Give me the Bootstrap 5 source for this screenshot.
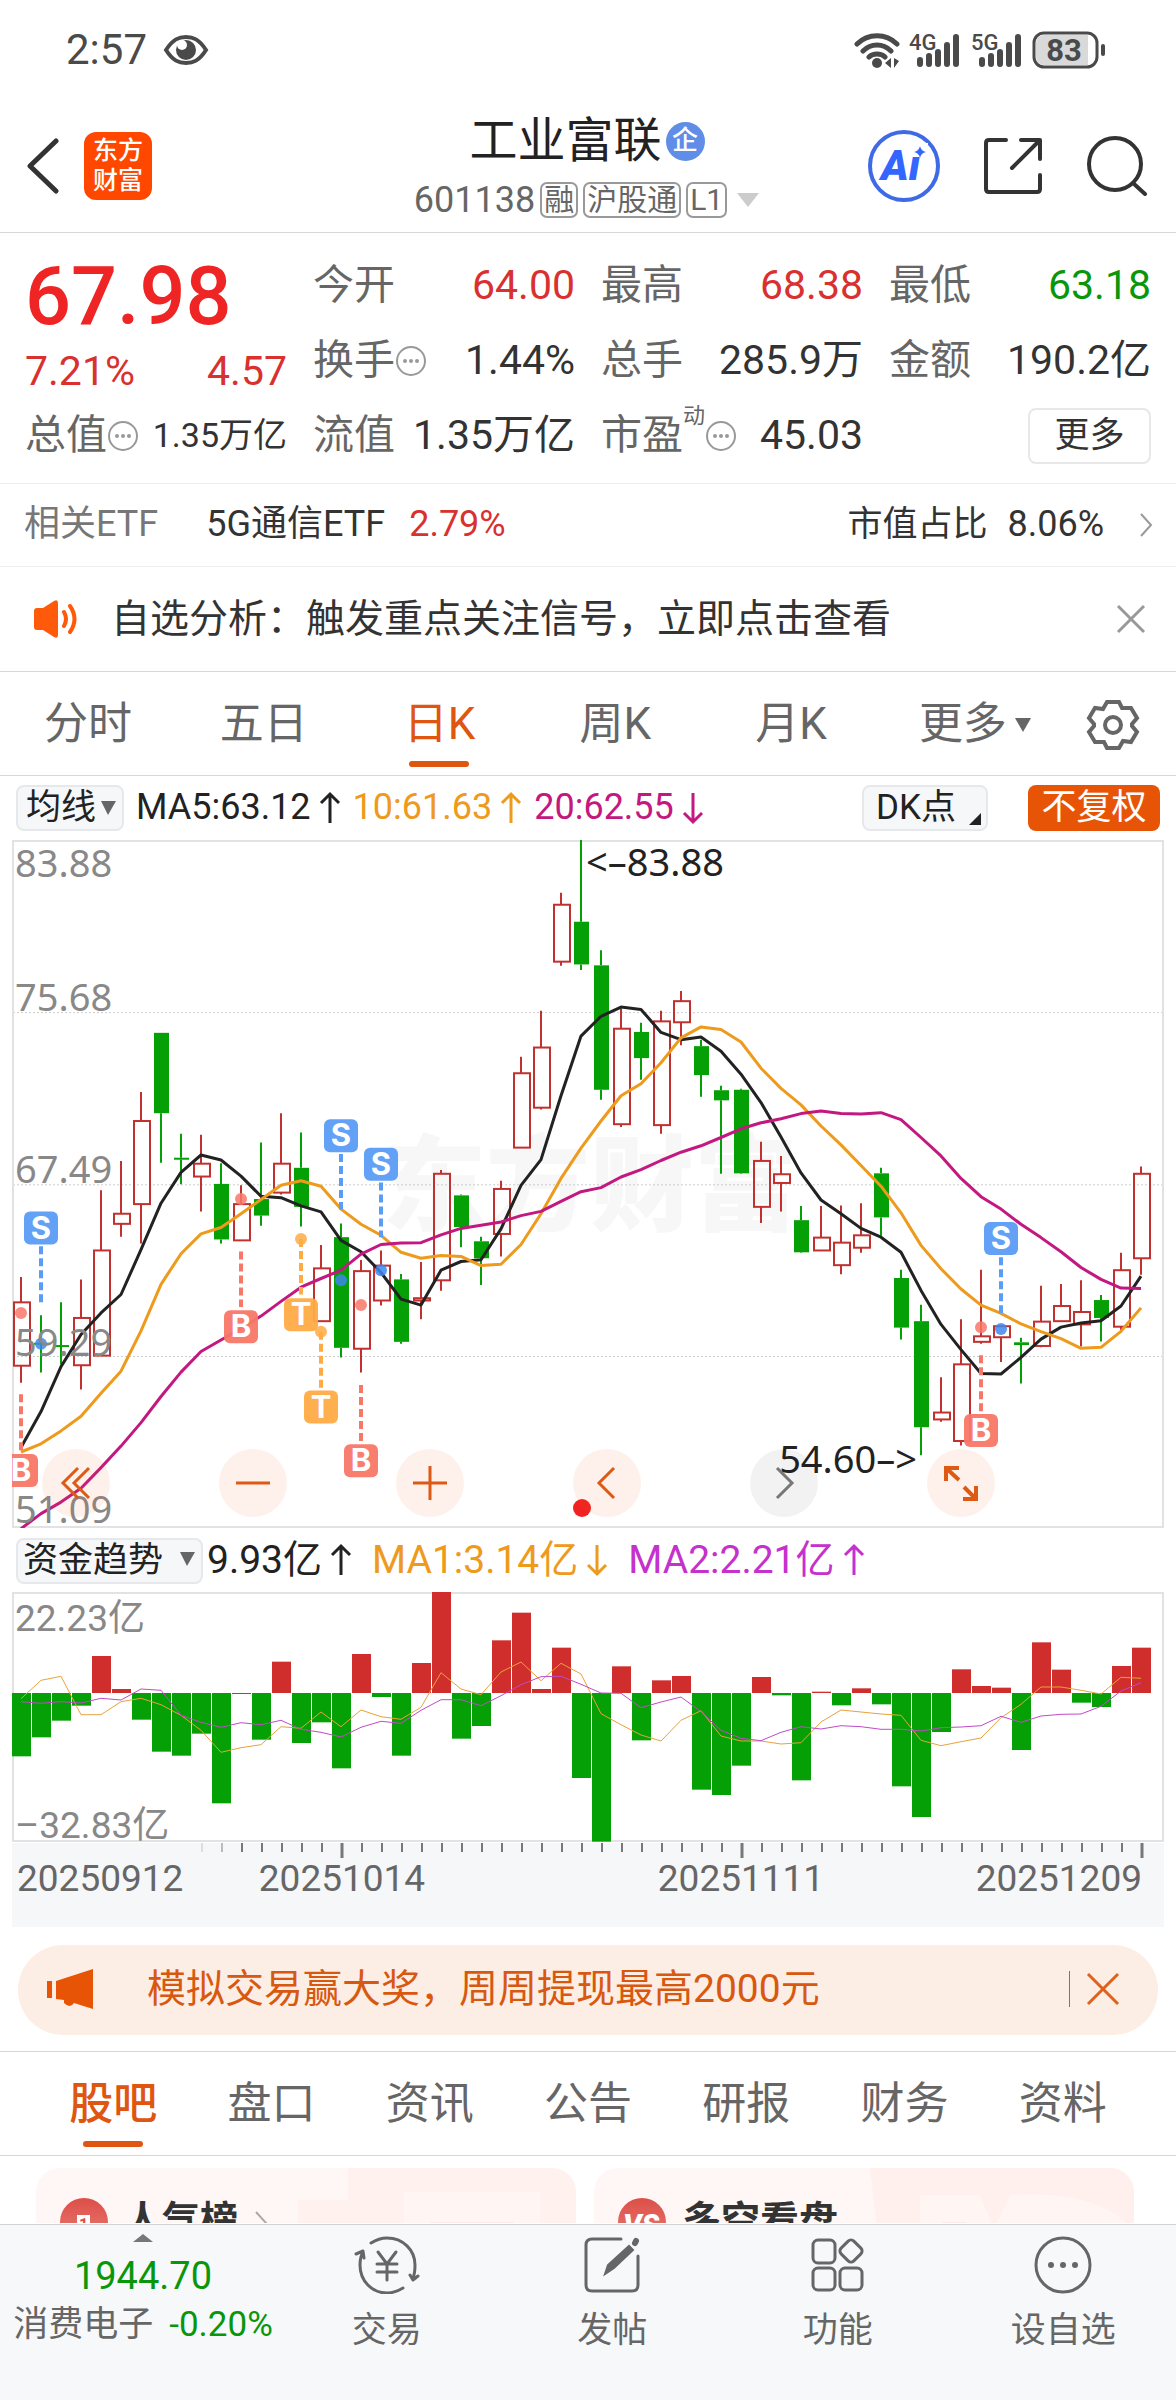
<!DOCTYPE html>
<html lang="zh-CN">
<head>
<meta charset="utf-8">
<meta name="viewport" content="width=device-width, initial-scale=1">
<title>工业富联 601138</title>
<link href="https://cdn.jsdelivr.net/npm/bootstrap@5.3.0/dist/css/bootstrap.min.css" rel="stylesheet">
<style>
:root{--brand:#e85406;--up:#d8312f;--down:#0a960a;--ink:#333;--soft:#666;--rule:#d8d8d8;--rule2:#ededed}
body{font-family:Roboto,"Noto Sans CJK SC",sans-serif;color:var(--ink);background:#fff;line-height:1.2;padding-bottom:176px}
svg{display:block;flex:none}
button,select{font-family:inherit;color:inherit}
a{color:inherit;text-decoration:none}
.plain{background:none;border:0;padding:0}
.statusbar{height:100px;padding:0 70px 0 66px;font-size:42px;color:#4a4a4a}
.topbar{display:grid;grid-template-columns:1fr auto 1fr;height:133px;padding:0 28px 0 26px;border-bottom:1px solid var(--rule)}
.topbar .side{height:132px}
.topbar .acts{gap:44px}
.brandmark{width:68px;height:68px;border-radius:12px;background:#ff4700;color:#fff;font-size:25px;font-weight:500;line-height:30px}
.stockname{font-size:48px;line-height:58px;color:#222;font-weight:400}
.qi{width:39px;height:39px;border-radius:50%;background:#5f8de8;color:#fff;font-size:26px;font-weight:500}
.stockcode{font-size:36px;line-height:40px;color:var(--soft);gap:5px;margin-top:10px}
.pill{height:36px;border:2px solid #999;border-radius:7px;padding:0 2px;font-size:30px;line-height:32px}
.quote{display:grid;grid-template-columns:repeat(4,1fr);grid-auto-rows:75px;column-gap:26px;padding:15px 25px 10px;font-size:41px;border-bottom:1px solid var(--rule2)}
.quote .lead-col{grid-row:span 3}
.quote .cell{display:flex;align-items:center;justify-content:space-between;white-space:nowrap}
.quote .cap{color:var(--soft);display:flex;align-items:center}
.price{height:98px;font-size:81px;font-weight:500;color:#ef2424}
.rowb{height:52px}.rowc{height:75px}
.s34{font-size:34px}
.up{color:var(--up)}.down{color:var(--down)}
.sup-dong{font-size:22px;align-self:flex-start;margin-top:-8px}
.morebtn{width:123px;height:56px;border:2px solid #e8e8e8;border-radius:8px;background:#fff;font-size:35px;line-height:40px}
.etf{height:83px;padding:0 20px 0 24px;font-size:36px;border-bottom:1px solid var(--rule2)}
.etf .cjk{font-size:35px}
.notice{height:105px;padding:0 30px 0 33px;font-size:39px;border-bottom:1px solid var(--rule)}
.tabs1{height:104px;border-bottom:1px solid var(--rule);font-size:44px;color:var(--soft);padding-right:4px}
.tabs1 .tab{width:15%}
.tab{height:100%;display:flex;align-items:center;justify-content:center;position:relative;background:none;border:0;padding:2px 0 0}
.tab.on{color:#de560f}
.tab.on::after{content:"";position:absolute;left:50%;bottom:8px;width:60px;height:6px;margin-left:-30px;border-radius:3px;background:#de560f}
.inds{height:64px;margin:0 16px;font-size:36px;white-space:nowrap}
.chip{height:46px;border:2px solid #e6e8ec;border-radius:8px;background:#f6f7f9;font-size:35px;line-height:40px;color:#222;padding:0 0 0 8px;appearance:none}
.chip.w1{width:108px}.chip.w2{width:187px;padding-left:5px}.chip.w3{width:126px;text-align:left;padding-left:12px}
.caret{position:absolute;right:8px;top:16px;pointer-events:none}
.caret.low{top:26px;right:5px}
.fq{width:132px;height:46px;border:0;border-radius:8px;background:var(--brand);color:#fff;font-size:35px;line-height:40px;padding:0;margin-left:40px}
.m5{color:#222}.m10{color:#ee9a1c}.m20{color:#c2187f}.f38{font-size:38px}.f39{font-size:39px}.mv{color:#c531cd}
.chartbox{margin:0 12px;position:relative}
.chartbox svg.plot{width:100%;height:auto}
.tools{position:absolute;left:0;right:0;bottom:11px;padding-left:30px;display:flex;gap:109px}
.rnd{width:68px;height:68px;border-radius:50%;border:0;padding:0;background:rgba(240,100,30,.09);display:flex;align-items:center;justify-content:center}
.rnd.off{background:rgba(0,0,0,.05)}
.numtxt{font-family:"Noto Sans","Noto Sans CJK SC",sans-serif;font-size:38px}
.promo{margin:18px 18px 16px;height:90px;border-radius:45px;background:#fceee5;color:#d9580f;font-size:39px;padding:0 38px 2px 29px}
.promo .bar{width:1px;height:36px;background:#d9580f}
.tabs2{height:105px;border-top:1px solid var(--rule);border-bottom:1px solid var(--rule);padding:0 34px;font-size:44px;color:var(--soft)}
.tabs2 .tab{flex:1}
.promos{padding:12px 42px 0 36px;gap:18px;height:67px;overflow:hidden}
.pcard{flex:1;height:150px;border-radius:24px;background:#fff7f5;padding:30px 24px;font-size:38px;font-weight:700;position:relative;overflow:hidden}
.pcard .deco{position:absolute;right:0;top:0}
.dot48{width:48px;height:48px;border-radius:50%;background:linear-gradient(#dc4f47,#e98079);color:#fff;overflow:hidden}
.bottomnav{height:176px;background:#f6f8fa;border-top:1px solid #d0d3d6;font-size:35px;color:var(--soft);align-items:stretch;padding:0}
.bottomnav .first{width:274px;padding:9px 0 0 12px}
.bottomnav .item{flex:1;padding-top:11px}
.bottomnav .item span{margin-top:16px}
</style>
<script src="https://cdn.jsdelivr.net/npm/bootstrap@5.3.0/dist/js/bootstrap.bundle.min.js"></script>
</head>
<body>
<div class="statusbar d-flex align-items-center">
  <span>2:57</span>
  <svg class="ms-3" width="46" height="32" viewBox="0 0 46 32"><path d="M3 16C10 5 16 3 23 3s13 2 20 13C36 27 30 29 23 29S10 27 3 16z" fill="none" stroke="#4a4a4a" stroke-width="4"/><circle cx="23" cy="16" r="10" fill="#4a4a4a"/><circle cx="19" cy="11" r="5" fill="#fff"/></svg>
  <div class="ms-auto d-flex align-items-center">
    <svg width="46" height="38" viewBox="0 0 46 38" fill="none" stroke="#4a4a4a" stroke-width="5" stroke-linecap="round"><path d="M3 13C14 2 32 2 43 13M9 20c8-8 20-8 28 0M15 26c4-4 12-4 16 0"/><circle cx="23" cy="32" r="5" fill="#4a4a4a" stroke="none"/><path d="M37 27v10l-6-5zM40 27v10l5-7z" fill="#4a4a4a" stroke="none"/></svg>
    <svg class="ms-2" width="54" height="38" viewBox="0 0 54 38" fill="none" stroke="#4a4a4a" stroke-width="6" stroke-linecap="round"><text x="1" y="19" font-size="22" font-weight="500" fill="#4a4a4a" stroke="none">4G</text><path d="M12 33v-4M21 33v-8M30 33V21M39 33V14M48 33V6"/></svg>
    <svg class="ms-2" width="54" height="38" viewBox="0 0 54 38" fill="none" stroke="#4a4a4a" stroke-width="6" stroke-linecap="round"><text x="1" y="19" font-size="22" font-weight="500" fill="#4a4a4a" stroke="none">5G</text><path d="M12 33v-4M21 33v-8M30 33V21M39 33V14M48 33V6"/></svg>
    <svg class="ms-2" width="74" height="38" viewBox="0 0 74 38"><rect x="2" y="2" width="63" height="34" rx="10" fill="#fff" stroke="#4a4a4a" stroke-width="3"/><path d="M12 4h44v30H12a8 8 0 0 1-8-8V12a8 8 0 0 1 8-8z" fill="#d9d9d9"/><text x="32" y="30" text-anchor="middle" font-size="31" font-weight="700" fill="#4a4a4a">83</text><path d="M71 15v8" stroke="#4a4a4a" stroke-width="4" stroke-linecap="round"/></svg>
  </div>
</div>

<header class="topbar">
  <div class="side d-flex align-items-center">
    <button class="plain" aria-label="返回"><svg width="34" height="56" viewBox="0 0 34 56"><path d="M30 3L4 28l26 25" fill="none" stroke="#333" stroke-width="5" stroke-linecap="round" stroke-linejoin="round"/></svg></button>
    <div class="brandmark ms-4 d-flex align-items-center justify-content-center text-center">东方<br>财富</div>
  </div>
  <div class="d-flex flex-column align-items-center pt-2">
    <div class="d-flex align-items-center mt-1"><h1 class="stockname m-0">工业富联</h1><span class="qi ms-1 d-flex align-items-center justify-content-center">企</span></div>
    <div class="stockcode d-flex align-items-center"><span>601138</span><span class="pill">融</span><span class="pill">沪股通</span><span class="pill">L1</span><svg class="ms-1" width="24" height="16" viewBox="0 0 24 16"><path d="M1 1h22L12 15z" fill="#ccc"/></svg></div>
  </div>
  <div class="side acts d-flex align-items-center justify-content-end">
    <button class="plain" aria-label="Ai"><svg width="72" height="72" viewBox="0 0 72 72"><circle cx="36" cy="36" r="34" fill="none" stroke="#3f6ae6" stroke-width="4"/><text x="13" y="50" font-size="42" font-weight="900" font-style="italic" fill="#3366ff">Ai</text><rect x="42" y="13" width="18" height="14" fill="#fff"/><path d="M52 16q1 5 6 6q-5 1-6 6q-1-5-6-6q5-1 6-6z" fill="#3366ff"/></svg></button>
    <button class="plain" aria-label="分享"><svg width="58" height="58" viewBox="0 0 58 58" fill="none" stroke="#333" stroke-width="4" stroke-linejoin="round" stroke-linecap="round"><path d="M22 3H5q-3 0-3 3v46q0 3 3 3h48q3 0 3-3V38M37 3h19v19M55 4L28 31"/></svg></button>
    <button class="plain" aria-label="搜索"><svg width="62" height="60" viewBox="0 0 62 60" fill="none" stroke="#333" stroke-width="4" stroke-linecap="round"><circle cx="29" cy="28" r="26"/><path d="M47 47l12 11"/></svg></button>
  </div>
</header>

<section class="quote">
  <div class="lead-col">
    <div class="price d-flex align-items-center">67.98</div>
    <div class="cell up rowb"><span>7.21%</span><span>4.57</span></div>
    <div class="cell rowc"><span class="cap">总值<svg width="32" height="32" viewBox="0 0 32 32"><use href="#more-dots"/></svg></span><span class="s34">1.35万亿</span></div>
  </div>
  <div class="cell"><span class="cap">今开</span><span class="up">64.00</span></div>
  <div class="cell"><span class="cap">最高</span><span class="up">68.38</span></div>
  <div class="cell"><span class="cap">最低</span><span class="down">63.18</span></div>
  <div class="cell"><span class="cap">换手<svg width="32" height="32" viewBox="0 0 32 32"><use href="#more-dots"/></svg></span><span>1.44%</span></div>
  <div class="cell"><span class="cap">总手</span><span>285.9万</span></div>
  <div class="cell"><span class="cap">金额</span><span>190.2亿</span></div>
  <div class="cell"><span class="cap">流值</span><span>1.35万亿</span></div>
  <div class="cell"><span class="cap">市盈<span class="sup-dong">动</span><svg width="32" height="32" viewBox="0 0 32 32"><use href="#more-dots"/></svg></span><span>45.03</span></div>
  <div class="cell justify-content-end"><button class="morebtn p-0">更多</button></div>
</section>
<svg width="0" height="0" class="position-absolute"><defs><g id="more-dots"><circle cx="16" cy="16" r="14" fill="none" stroke="#999" stroke-width="2"/><g fill="#999"><circle cx="10" cy="16" r="2"/><circle cx="16" cy="16" r="2"/><circle cx="22" cy="16" r="2"/></g></g></defs></svg>

<a href="#" class="etf d-flex align-items-center">
  <span style="color:#777">相关ETF</span><span class="ms-5">5G通信ETF</span><span class="up ms-4">2.79%</span>
  <span class="cjk ms-auto">市值占比</span><span class="ms-3 ps-1">8.06%</span>
  <svg class="ms-4 ps-2" width="28" height="26" viewBox="0 0 20 26"><path d="M5 2l10 11L5 24" fill="none" stroke="#999" stroke-width="2"/></svg>
</a>

<div class="notice d-flex align-items-center">
  <svg width="46" height="40" viewBox="0 0 46 40"><path d="M1 12q0-3 3-3h6L21 2q4-2 4 2v32q0 4-4 2L10 31H4q-3 0-3-3z" fill="#ff5a0a"/><path d="M31 13q4 7 0 14M37 7q9 13 0 26" fill="none" stroke="#ff5a0a" stroke-width="4" stroke-linecap="round"/></svg>
  <span class="ms-4 ps-2">自选分析：触发重点关注信号，立即点击查看</span>
  <button class="plain ms-auto" aria-label="关闭"><svg width="30" height="30" viewBox="0 0 30 30"><path d="M2 2l26 26M28 2L2 28" stroke="#999" stroke-width="3"/></svg></button>
</div>

<nav class="tabs1 d-flex align-items-center">
  <button class="tab">分时</button><button class="tab">五日</button><button class="tab on">日K</button><button class="tab">周K</button><button class="tab">月K</button>
  <button class="tab ps-3">更多<svg class="ms-2" width="16" height="14" viewBox="0 0 16 14"><path d="M0 0h16L8 14z" fill="#666"/></svg></button>
  <button class="tab flex-fill w-auto" aria-label="设置"><svg width="54" height="54" viewBox="-27 -27 54 54" fill="none" stroke="#666" stroke-width="4"><path d="M-6-23H6L9-17 18-17 24-7 19-1V1L24 7 18 17 10 16 6 23H-6L-9 17-18 17-24 7-19 1V-1L-24-7-18-17-10-16z"/><circle r="8"/></svg></button>
</nav>

<div class="inds d-flex align-items-center">
  <div class="position-relative"><select class="chip w1" aria-label="主图指标"><option>均线</option></select><svg class="caret" width="15" height="14" viewBox="0 0 15 14"><path d="M0 0h15L7 14z" fill="#666"/></svg></div>
  <span class="m5 d-flex align-items-center ms-2 ps-1">MA5:63.12<svg class="ms-2" width="22" height="34" viewBox="0 0 22 34"><use href="#arr"/></svg></span>
  <span class="m10 d-flex align-items-center ms-2 ps-1">10:61.63<svg class="ms-2" width="22" height="34" viewBox="0 0 22 34"><use href="#arr"/></svg></span>
  <span class="m20 d-flex align-items-center ms-2 ps-1">20:62.55<svg class="ms-2" width="22" height="34" viewBox="0 0 22 34"><use href="#arr" transform="rotate(180 11 17)"/></svg></span>
  <button class="chip w3 position-relative ms-auto">DK点<svg class="caret low" width="12" height="12" viewBox="0 0 12 12"><path d="M12 0v12H0z" fill="#222"/></svg></button>
  <button class="fq">不复权</button>
</div>
<svg width="0" height="0" class="position-absolute"><defs><path id="arr" d="M11 32V3M2 12l9-9 9 9" fill="none" stroke="currentColor" stroke-width="3"/></defs></svg>

<div class="chartbox">
  <svg class="plot" id="kline" viewBox="0 0 1152 688" role="img" aria-label="日K线"></svg>
  <div class="tools">
    <button class="rnd" aria-label="最左"><svg width="32" height="34" viewBox="0 0 32 34" fill="none" stroke="#dd5a14" stroke-width="3"><path d="M18 2L3 17l15 15M29 2L14 17l15 15"/></svg></button>
    <button class="rnd" aria-label="缩小"><svg width="34" height="34" viewBox="0 0 34 34" stroke="#dd5a14" stroke-width="3"><path d="M0 17h34"/></svg></button>
    <button class="rnd" aria-label="放大"><svg width="34" height="34" viewBox="0 0 34 34" stroke="#dd5a14" stroke-width="3"><path d="M0 17h34M17 0v34"/></svg></button>
    <button class="rnd" aria-label="左移"><svg width="22" height="34" viewBox="0 0 22 34" fill="none" stroke="#dd5a14" stroke-width="3"><path d="M18 2L3 17l15 15"/></svg></button>
    <button class="rnd off" aria-label="右移"><svg width="22" height="34" viewBox="0 0 22 34" fill="none" stroke="#777" stroke-width="3"><path d="M4 2l15 15L4 32"/></svg></button>
    <button class="rnd" aria-label="全屏"><svg width="36" height="36" viewBox="0 0 36 36" fill="none" stroke="#dd5a14" stroke-width="4"><path d="M3 16V3h13M3 3l13 12M20 34h13V21M33 34L21 22"/></svg></button>
  </div>
</div>

<div class="inds f39 d-flex align-items-center">
  <div class="position-relative"><select class="chip w2" aria-label="副图指标"><option>资金趋势</option></select><svg class="caret" width="15" height="14" viewBox="0 0 15 14"><path d="M0 0h15L7 14z" fill="#666"/></svg></div>
  <span class="m5 d-flex align-items-center ms-1">9.93亿<svg class="ms-2 me-1" width="22" height="34" viewBox="0 0 22 34"><use href="#arr"/></svg></span>
  <span class="m10 d-flex align-items-center ms-3">MA1:3.14亿<svg class="ms-2" width="22" height="34" viewBox="0 0 22 34"><use href="#arr" transform="rotate(180 11 17)"/></svg></span>
  <span class="mv d-flex align-items-center ms-3 ps-1">MA2:2.21亿<svg class="ms-2" width="22" height="34" viewBox="0 0 22 34"><use href="#arr"/></svg></span>
</div>
<div class="chartbox"><svg class="plot" id="flow" viewBox="0 0 1152 335" role="img" aria-label="资金趋势"></svg></div>

<div class="promo d-flex align-items-center">
  <svg width="48" height="42" viewBox="0 0 48 42" fill="#e85406"><path d="M0 13h5v17H0zM9 13L46 1v40L27 35q-4 6-10 0v-3l-8-1z"/></svg>
  <span class="ms-5 ps-1">模拟交易赢大奖，周周提现最高2000元</span>
  <span class="bar ms-auto me-3"></span>
  <button class="plain" aria-label="关闭"><svg width="34" height="34" viewBox="0 0 34 34"><path d="M2 2l30 30M32 2L2 32" stroke="#e0611b" stroke-width="3"/></svg></button>
</div>

<nav class="tabs2 d-flex">
  <button class="tab on fw-medium">股吧</button><button class="tab">盘口</button><button class="tab">资讯</button><button class="tab">公告</button><button class="tab">研报</button><button class="tab">财务</button><button class="tab">资料</button>
</nav>

<div class="promos d-flex">
  <a href="#" class="pcard d-flex"><svg class="deco" width="280" height="150" viewBox="0 0 280 150"><path d="M52 0h228v150H2V32h50z" fill="#fff1ee"/><path d="M108 24h136v126H108z" fill="#fff6f4"/><path d="M134 54h84v96h-84z" fill="#fdeae7"/></svg><span class="dot48"><svg width="48" height="48" viewBox="0 0 48 48"><path d="M8 25h9v-8h13v10h10v15H8z" fill="#fff"/><text x="19" y="32" font-size="16" font-weight="700" fill="#dc4f47">1</text></svg></span><span class="ms-3">人气榜</span><svg class="ms-3" width="14" height="48" viewBox="0 0 14 48"><path d="M2 14l10 11L2 36" fill="none" stroke="#aaa" stroke-width="2"/></svg></a>
  <a href="#" class="pcard d-flex"><svg class="deco" width="264" height="150" viewBox="0 0 264 150"><path d="M0 0h264v150H18z" fill="#ffefed"/><path d="M50 27h60l14 34 16-34q90-6 124 36v87H50z" fill="#fff5f3"/><path d="M72 54h24v96H72zM160 150V80q30-26 80 10v60z" fill="#fdeae8"/></svg><span class="dot48"><svg width="48" height="48" viewBox="0 0 48 48"><text x="23" y="37" text-anchor="middle" font-size="29" font-weight="900" font-style="italic" fill="#fff">VS</text></svg></span><span class="ms-3 f39">多空看盘</span></a>
</div>

<nav class="bottomnav fixed-bottom d-flex">
  <a href="#" class="first d-flex flex-column align-items-center down">
    <svg width="20" height="8" viewBox="0 0 20 8"><path d="M10 0l10 8H0z" fill="#777"/></svg>
    <span class="f38 mt-2 pt-1">1944.70</span>
    <span class="d-flex pt-1"><span style="color:#666">消费电子</span><span class="ms-3">-0.20%</span></span>
  </a>
  <a href="#" class="item d-flex flex-column align-items-center"><svg width="66" height="58" viewBox="0 0 66 58" fill="none" stroke="#666" stroke-width="3" stroke-linecap="round"><path d="M17 7q8-5 16-5c16 0 28 12 28 27q0 8-2 13M59 44l-3-5M59 44l5-4M49 52q-8 5-16 5C18 57 6 45 6 29q0-8 3-13M9 15l-7 3M9 15l1 7"/><path d="M24 16l9 12 9-12M33 28v16M23 28h20M23 36h20"/></svg><span>交易</span></a>
  <a href="#" class="item d-flex flex-column align-items-center"><svg width="58" height="58" viewBox="0 0 58 58" fill="none" stroke="#666" stroke-width="3" stroke-linecap="round"><path d="M38 3H9Q3 3 3 9v40q0 6 6 6h40q6 0 6-6V20"/><path d="M22 38l3-9L46 10l4 4-19 18z" fill="#666" stroke-width="2"/><path d="M52 7l1-2" stroke-width="6"/></svg><span>发帖</span></a>
  <a href="#" class="item d-flex flex-column align-items-center"><svg width="58" height="58" viewBox="0 0 58 58" fill="none" stroke="#666" stroke-width="3"><rect x="4" y="4" width="22" height="23" rx="5"/><rect x="4" y="32" width="22" height="22" rx="5"/><rect x="31" y="32" width="22" height="22" rx="5"/><rect x="33" y="6" width="18" height="18" rx="4" transform="rotate(45 42 15)"/></svg><span>功能</span></a>
  <a href="#" class="item d-flex flex-column align-items-center"><svg width="58" height="58" viewBox="0 0 58 58"><circle cx="29" cy="29" r="27" fill="none" stroke="#666" stroke-width="3"/><g fill="#666"><circle cx="17" cy="29" r="3"/><circle cx="29" cy="29" r="3"/><circle cx="41" cy="29" r="3"/></g></svg><span>设自选</span></a>
</nav>

<script>
const R='#c0312f',G='#05a005';
const X=i=>9+20*i;
// Candles: [rising, high, body top, body bottom, low] on the plot's own vertical scale
const K=[[1,995,1050,1188,1225],[0,1078,1138,1142,1203],[0,1050,1143,1147,1185],[1,1000,1084,1187,1240],[1,806,937,1166,1166],[1,742,857,879,907],[1,592,655,836,922],[0,463,463,638,746],[0,683,735,739,793],[1,685,748,776,852],[0,747,792,913,922],[1,795,836,915,915],[0,702,825,861,883],[1,638,748,811,815],[0,680,757,842,885],[1,925,976,1091,1091],[0,878,908,1149,1170],[1,958,982,1151,1203],[1,937,970,1046,1057],[0,988,1000,1136,1140],[1,962,1041,1046,1087],[1,762,770,1002,1025],[0,815,817,886,930],[0,907,917,954,1012],[1,785,803,901,950],[1,515,551,713,713],[1,415,495,626,630],[1,158,184,308,317],[0,43,221,314,326],[0,283,316,587,609],[1,410,454,662,668],[0,441,461,518,565],[1,415,438,664,683],[1,372,394,440,490],[0,478,492,555,602],[0,578,588,610,770],[0,585,587,769,770],[1,700,742,842,877],[1,731,771,790,852],[0,840,871,941,942],[1,840,909,937,937],[1,839,920,969,989],[1,834,904,931,942],[0,757,769,865,905],[0,979,997,1105,1131],[0,1055,1091,1322,1383],[1,1213,1290,1305,1310],[1,1087,1185,1352,1362],[1,979,1124,1136,1140],[1,1102,1102,1126,1180],[0,1127,1137,1143,1227],[1,1014,1092,1145,1148],[1,1010,1058,1091,1091],[1,1002,1071,1098,1146],[0,1034,1045,1084,1135],[1,942,980,1103,1115],[1,754,770,954,990]];
const MA5=[1366,1288,1190,1120,1073,1033,935,834,767,729,740,775,819,822,840,853,915,940,985,1043,1056,980,961,957,890,795,739,600,470,427,407,412,462,478,472,503,553,615,690,768,827,857,889,908,941,1024,1098,1153,1205,1206,1170,1130,1104,1095,1090,1058,993];
const MA10=[1376,1358,1330,1298,1248,1200,1112,1011,944,901,887,857,826,795,785,797,847,880,904,941,954,948,950,970,967,924,857,780,714,655,600,574,528,474,450,456,483,540,584,620,666,707,752,797,855,926,977,1021,1056,1074,1097,1114,1129,1150,1148,1113,1062];
const MA20=[1543,1510,1485,1455,1410,1363,1312,1255,1202,1157,1132,1107,1080,1048,1017,998,980,945,924,921,920,903,889,882,875,861,852,830,809,800,777,761,741,723,709,691,672,659,650,639,633,639,640,637,652,691,731,780,820,847,880,909,940,974,1000,1019,1020];
// Trade marks: [letter, index, badge centre, line start, line end, dot]
const MK=[['S',1,887,928,1050,1140],['S',16,686,727,848,1002],['S',18,748,789,908,980],['S',49,910,952,1073,1108],['B',0,1415,1250,1372,1073],['B',11,1102,939,1060,825],['B',17,1394,1230,1352,1056],['B',48,1328,1165,1287,1104],['T',14,1076,912,1033,912],['T',15,1277,1114,1236,1114]];
const MC={S:'#5b9cf6',B:'#f87868',T:'#ffab45'};
const Y=v=>(v-43)/2.178;
const line=(a,f,c,w)=>`<polyline points="${a.map((v,i)=>X(i)+','+f(v).toFixed(1)).join(' ')}" fill="none" stroke="${c}" stroke-width="${w}" stroke-linejoin="round"/>`;
let s='<text x="578" y="383" text-anchor="middle" font-size="104" font-weight="900" fill="#f7f7f7">东方财富</text>';
for(const v of [419,794,1168]) s+=`<path d="M1 ${Y(v)}H1151" stroke="#ccc" stroke-dasharray="2 2"/>`;
s+='<rect x="1" y="1" width="1150" height="686" fill="none" stroke="#e2e2e2" stroke-width="2"/>';
K.forEach(([up,h,t,b,l],i)=>{
  const x=X(i),c=up?R:G,[H,T,B,L]=[h,t,b,l].map(Y);
  s+=`<path d="M${x} ${H}V${T}M${x} ${B}V${L}" stroke="${c}" stroke-width="2"/>`;
  s+=up?`<rect x="${x-7}" y="${T}" width="16" height="${Math.max(B-T,1)}" fill="none" stroke="${c}" stroke-width="2"/>`:`<rect x="${x-7}" y="${T}" width="15" height="${Math.max(B-T,2)}" fill="${c}"/>`;
});
s+=line(MA5,Y,'#222',3)+line(MA10,Y,'#ee9a1c',3)+line(MA20,Y,'#c2187f',3);
for(const [k,i,c,a,b,d] of MK){
  const x=X(i),y=Y(c);
  s+=`<path d="M${x} ${Y(a)}V${Y(b)}" stroke="${MC[k]}" stroke-width="4" stroke-dasharray="8 4"/><circle cx="${x}" cy="${Y(d)}" r="6" fill="${k=='S'?'#3d86ee':MC[k]}" opacity=".85"/>`;
  s+=`<rect x="${x-17}" y="${y-16}" width="34" height="33" rx="6" fill="${MC[k]}" opacity=".95"/><text x="${x}" y="${y+11}" text-anchor="middle" font-family="Inter" font-size="31" font-weight="700" fill="#fff">${k}</text>`;
}
for(const [t,y] of [['83.88',37],['75.68',171],['67.49',343],['59.29',516],['51.09',683]]) s+=`<text class="numtxt" x="3" y="${y}" fill="#888">${t}</text>`;
s+='<text class="numtxt" x="574" y="36" fill="#222">&lt;–83.88</text><text class="numtxt" x="905" y="633" text-anchor="end" fill="#222">54.60–&gt;</text><circle cx="570" cy="668" r="9" fill="#f02222"/>';
document.getElementById('kline').innerHTML=s;

// Net inflow bars and their averages
const V=[678,621,571,526,377,476,568,664,676,610,819,491,628,394,638,576,714,371,500,676,398,185,625,587,330,247,476,352,743,934,408,630,450,437,778,794,706,440,495,750,484,525,474,522,768,860,605,417,467,472,659,336,418,517,530,407,352];
const F1=[505,450,438,553,553,514,504,523,555,600,666,652,643,589,594,545,589,539,559,567,531,427,476,493,425,395,451,399,431,550,583,614,632,570,541,617,632,632,641,637,575,539,545,551,555,630,646,634,623,562,522,470,470,480,491,441,444];
const F2=[514,519,514,518,504,509,476,480,555,576,591,577,583,570,597,606,620,591,573,579,540,508,508,526,496,463,439,438,462,488,489,532,515,500,544,600,624,631,606,589,596,586,589,597,597,602,592,590,586,558,576,557,552,551,528,482,457];
const Z=v=>(v-185)/3;
let f='<rect y="251" width="1152" height="84" fill="#f6f7f9"/><rect x="1" y="1" width="1150" height="248" fill="none" stroke="#e2e2e2" stroke-width="2"/>';
V.forEach((v,i)=>{const a=Z(Math.min(v,488)),b=Z(Math.max(v,488));f+=`<rect x="${X(i)-9}" y="${a}" width="19" height="${b-a}" fill="${v<488?'#d02e2c':'#05a005'}"/>`;});
f+=line(F1,Z,'#e8a23c',1)+line(F2,Z,'#c04ac8',1);
for(let i=9;i<57;i++){const big=i==16||i==36||i==56;f+=`<path d="M${X(i)+1} 251v${big?15:9}" stroke="${i==9?'#ddd':i==10?'#bbb':'#777'}" stroke-width="${big?3:2}"/>`;}
f+='<g font-size="37" fill="#888"><text x="3" y="39">22.23亿</text><text x="3" y="246">–32.83亿</text></g><g font-size="37" fill="#666"><text x="5" y="299">20250912</text><text x="330" y="299" text-anchor="middle">20251014</text><text x="729" y="299" text-anchor="middle">20251111</text><text x="1130" y="299" text-anchor="end">20251209</text></g>';
document.getElementById('flow').innerHTML=f;
</script>
</body>
</html>
